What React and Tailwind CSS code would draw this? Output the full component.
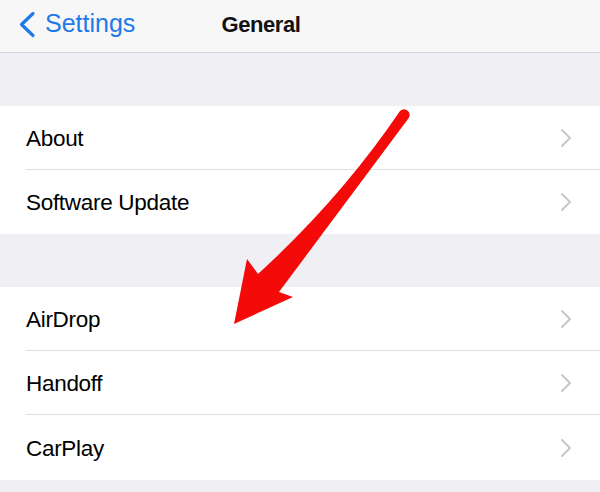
import React from "react";

function Chevron() {
  return (
    <svg width="12" height="20" viewBox="0 0 12 20" className="shrink-0">
      <polyline points="2,2 10,10 2,18" fill="none" stroke="#c7c7cc" strokeWidth="2" strokeLinecap="round" strokeLinejoin="round" />
    </svg>
  );
}

function Row({ label, last, h = "h-[64px]" }) {
  return (
    <div className={`${h} pl-[26px] flex`}>
      <div className={`flex-1 flex items-center pr-[28px] ${last ? "" : "border-b border-[#e0e0e4]"}`}>
        <span className="flex-1 text-[22.5px] text-black tracking-[-0.3px] pt-[2px]">{label}</span>
        <Chevron />
      </div>
    </div>
  );
}

export default function App() {
  return (
    <div className="relative w-[600px] h-[492px] overflow-hidden bg-[#efeff4] font-['Liberation_Sans',Arial,sans-serif]">
      <div className="h-[53px] bg-[#f7f7f8] border-b border-[#d6d6da] relative flex items-center pb-[4px]">
        <div className="flex items-center pl-[18px] gap-[9px]">
          <svg width="18" height="27" viewBox="0 0 18 27">
            <polyline points="15,2.5 3.5,13.5 15,24.5" fill="none" stroke="#1f7ae8" strokeWidth="3.2" strokeLinecap="round" strokeLinejoin="round" />
          </svg>
          <span className="text-[25px] text-[#1f7ae8]">Settings</span>
        </div>
        <div className="absolute left-0 right-0 top-0 bottom-[4px] flex items-center justify-center pointer-events-none">
          <span className="text-[22px] font-semibold text-[#111] pr-[78px] tracking-[-0.4px]">General</span>
        </div>
      </div>
      <div className="h-[53px]" />
      <div className="bg-white">
        <Row label="About" />
        <Row label="Software Update" last />
      </div>
      <div className="h-[53px]" />
      <div className="bg-white">
        <Row label="AirDrop" />
        <Row label="Handoff" />
        <Row label="CarPlay" last h="h-[65px]" />
      </div>
      <svg className="absolute left-0 top-0 pointer-events-none" width="600" height="492" viewBox="0 0 600 492">
        <path
          d="M 400 111 Q 341 198 258 274 L 247 259 L 234 324 L 293 297 L 279 292 L 408 119 A 4.6 4.6 0 0 0 400 111 Z"
          fill="#f50a0a"
        />
      </svg>
    </div>
  );
}
